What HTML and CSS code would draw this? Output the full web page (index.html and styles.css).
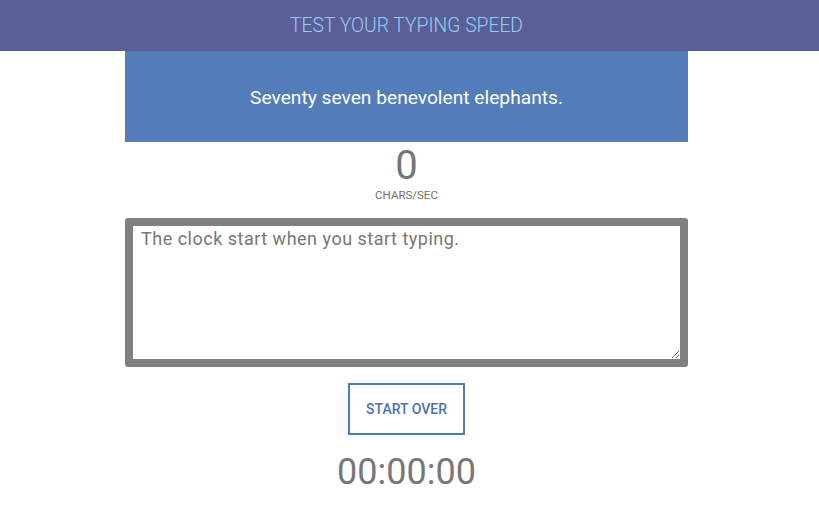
FILE: index.html
```html
<!DOCTYPE html>
<html>
<head>
<meta charset="utf-8">
<link rel="stylesheet" href="styles.css">
</head>
<body>
<header class="masthead">
  <h1 class="title">TEST YOUR TYPING SPEED</h1>
</header>
<main class="main">
  <section class="prompt">
    <p class="prompt-text">Seventy seven benevolent elephants.</p>
  </section>
  <div class="speed">
    <div class="speed-value">0</div>
    <div class="speed-label">CHARS/SEC</div>
  </div>
  <textarea class="typing-area" placeholder="The clock start when you start typing."></textarea>
  <button class="reset-btn">START OVER</button>
  <div class="timer">00:00:00</div>
</main>
</body>
</html>
```
FILE: styles.css
```css
html, body {
  margin: 0;
  padding: 0;
  background: #ffffff;
  font-family: Roboto, "Noto Sans", sans-serif;
}
.masthead {
  height: 51px;
  background: #5c5f97;
  display: flex;
  align-items: center;
  justify-content: center;
  padding-right: 6px;
}
.title {
  margin: 0;
  font-size: 19.3px;
  font-weight: 300;
  color: #8fd0f2;
}
.main {
  width: 563px;
  margin-left: calc(50% - 284.5px);
  display: flex;
  flex-direction: column;
  align-items: center;
}
.prompt {
  width: 563px;
  height: 91px;
  background: #527db9;
  display: flex;
  align-items: center;
  justify-content: center;
}
.prompt-text {
  margin: 0;
  color: #ffffff;
  font-size: 19.2px;
  padding-top: 2px;
}
.speed {
  display: flex;
  flex-direction: column;
  align-items: center;
  margin-top: 2px;
}
.speed-value {
  font-size: 40px;
  line-height: 44px;
  color: #767676;
  font-weight: 400;
}
.speed-label {
  font-size: 11.5px;
  color: #707070;
  line-height: 14px;
  margin-top: 0;
}
.typing-area {
  margin-top: 16px;
  width: 563px;
  height: 149px;
  box-sizing: border-box;
  border: 8px solid #808080;
  border-radius: 3px;
  padding: 2px 8px;
  font-family: Roboto, "Noto Sans", sans-serif;
  font-size: 18px;
  letter-spacing: 0.5px;
  color: #777;
  outline: none;
  display: block;
}
.typing-area::placeholder {
  color: #777777;
  opacity: 1;
}
.reset-btn {
  margin-top: 16px;
  width: 117px;
  height: 52px;
  background: #ffffff;
  border: 2px solid #4f7ab8;
  color: #4c71ab;
  font-family: Roboto, "Noto Sans", sans-serif;
  font-weight: 500;
  font-size: 14px;
  padding: 0;
  cursor: pointer;
}
.timer {
  margin-top: 16px;
  font-size: 36px;
  line-height: 42px;
  color: #777777;
  font-weight: 400;
}
```
